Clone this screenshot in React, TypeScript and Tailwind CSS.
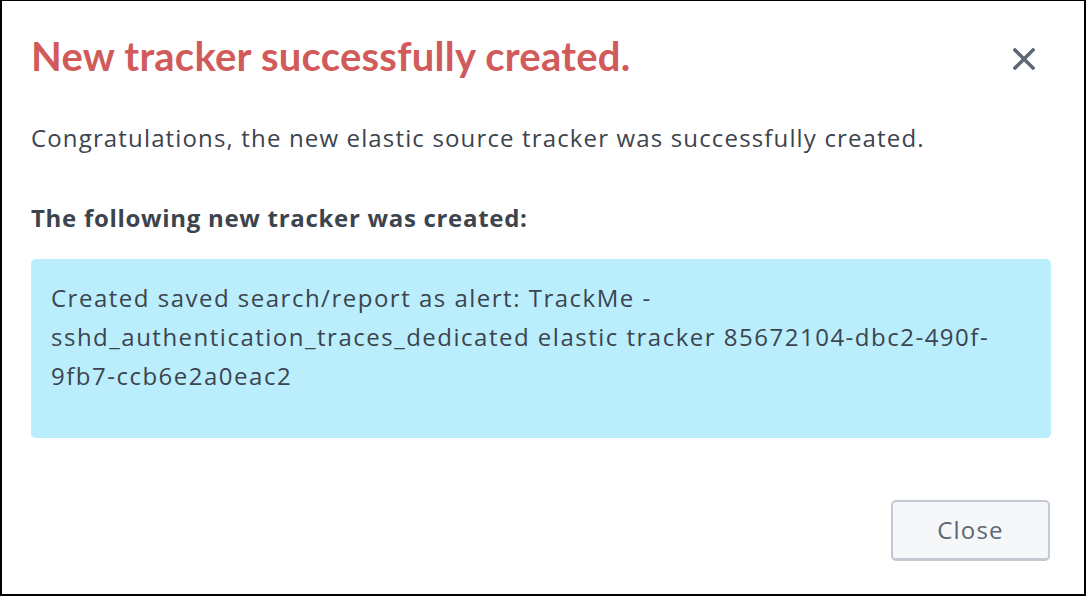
const CloseIcon = () => (
  <svg width="22" height="22" viewBox="0 0 22 22" fill="none">
    <path d="M2 2L20 20M20 2L2 20" stroke="#5c6773" strokeWidth="3.4" strokeLinecap="square" />
  </svg>
);

const body = { fontFamily: '"Open Sans", "Noto Sans", sans-serif' };
const heading = { fontFamily: 'Lato, "Open Sans", sans-serif' };

const App = () => {
  return (
    <div
      className="w-[1086px] h-[596px] bg-white border-black border-t border-l-2 border-r-2 border-b-2 flex flex-col text-[#3c444d]"
      style={body}
    >
      <div className="flex items-start justify-between pl-[29px] pr-[49px] pt-[29px]">
        <h1 className="text-[40px] leading-[52px] font-bold tracking-[0.25px] text-[#d15b5b]" style={heading}>
          New tracker successfully created.
        </h1>
        <button className="mt-[18px]">
          <CloseIcon />
        </button>
      </div>
      <div className="pl-[29px] pr-[33px] flex flex-col">
        <p className="mt-[39px] text-[24px] leading-[34px] tracking-[1.15px]">
          Congratulations, the new elastic source tracker was successfully created.
        </p>
        <p className="mt-[46px] text-[24px] leading-[34px] font-bold tracking-[0.7px]">
          The following new tracker was created:
        </p>
        <div className="mt-[24px] h-[179px] rounded-[5px] bg-[#bbeefd] pl-[20px] pr-[8px] pt-[19px] text-[24px] leading-[39px] tracking-[1.5px]">
          Created saved search/report as alert: TrackMe -
          <br />
          sshd_authentication_traces_dedicated elastic tracker 85672104-dbc2-490f-
          <br />
          9fb7-ccb6e2a0eac2
        </div>
      </div>
      <div className="flex justify-end pr-[34px] mt-[62px]">
        <button className="w-[159px] h-[61px] rounded-[5px] border-2 border-b-[3px] border-[#c3cad4] bg-[#f6f7f9] text-[24px] tracking-[1.2px] text-[#5c6773]">
          Close
        </button>
      </div>
    </div>
  );
};

export default App;
